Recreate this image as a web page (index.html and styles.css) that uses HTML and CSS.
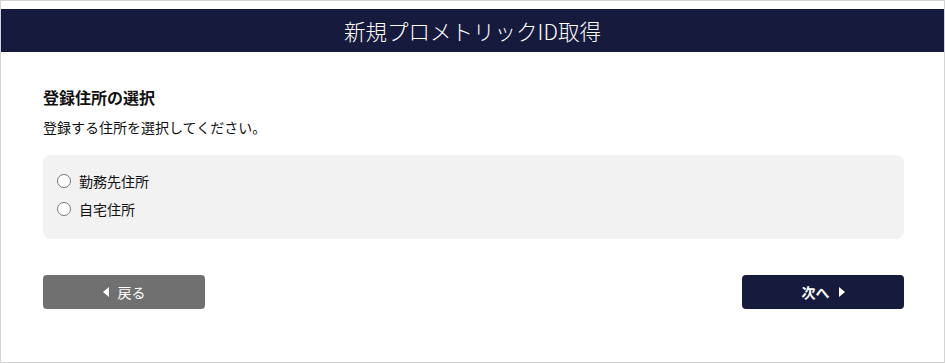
FILE: index.html
```html
<!DOCTYPE html>
<html>

<head>
    <title>新規プロメトリックID取得</title>
    <link rel="stylesheet" href="styles.css">
</head>

<body>
    <div class="page">
        <div class="header">新規プロメトリックID取得</div>

        <div class="content">
            <h2 class="title">登録住所の選択</h2>
            <p class="lead">登録する住所を選択してください。</p>

            <div class="choices">
                <label class="choice"><input type="radio" name="address" value="office"> 勤務先住所</label>
                <label class="choice"><input type="radio" name="address" value="home"> 自宅住所</label>
            </div>

            <div class="buttons">
                <button class="btn back"><span class="arrow left"></span>戻る</button>
                <button class="btn next">次へ<span class="arrow right"></span></button>
            </div>
        </div>
    </div>
</body>

</html>
```

FILE: styles.css
```css
html, body {
    margin: 0;
    padding: 0;
    background-color: #fff;
}

body {
    font-family: "Noto Sans CJK JP", "Noto Sans", sans-serif;
    color: #111;
}

.page {
    box-sizing: border-box;
    width: 945px;
    height: 363px;
    border: 1px solid #d4d4d4;
    padding-top: 8px;
}

.header {
    background-color: #161a3c;
    color: #fff;
    height: 43px;
    line-height: 43px;
    text-align: center;
    font-size: 21.5px;
    font-weight: 300;
}

.content {
    padding: 0 40px 0 42px;
}

.title {
    margin: 34px 0 0;
    font-size: 16px;
    font-weight: bold;
    line-height: 22px;
}

.lead {
    margin: 9px 0 0;
    font-size: 14px;
    line-height: 20px;
}

.choices {
    margin-top: 18px;
    background-color: #f2f2f2;
    border-radius: 8px;
    padding: 12px 13px 16px;
    height: 56px;
}

.choice {
    display: flex;
    align-items: center;
    font-size: 14px;
    height: 28px;
}

.choice input {
    margin: 0 8px 0 1px;
    width: 14px;
    height: 14px;
}

.buttons {
    display: flex;
    justify-content: space-between;
    margin-top: 36px;
}

.btn {
    width: 162px;
    height: 34px;
    border: none;
    border-radius: 4px;
    color: #fff;
    font-family: inherit;
    font-size: 14px;
    display: flex;
    align-items: center;
    justify-content: center;
    gap: 9px;
}

.btn.back {
    background-color: #707070;
}

.btn.next {
    background-color: #161a3c;
    font-weight: bold;
}

.arrow {
    width: 0;
    height: 0;
    border-top: 5px solid transparent;
    border-bottom: 5px solid transparent;
}

.arrow.left {
    border-right: 6px solid #fff;
}

.arrow.right {
    border-left: 6px solid #fff;
}
```
